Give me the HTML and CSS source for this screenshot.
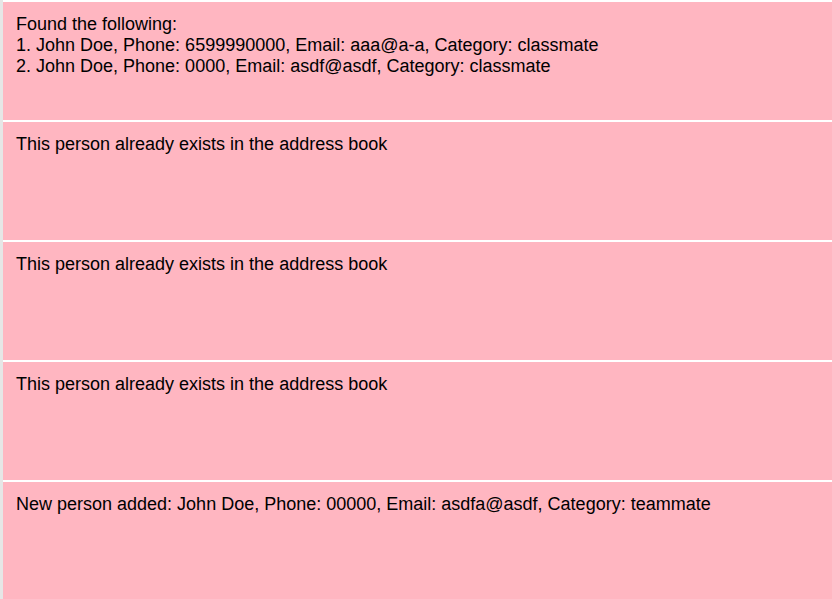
FILE: index.html
```html
<!DOCTYPE html>
<html>
<head>
<meta charset="utf-8">
<link rel="stylesheet" href="styles.css">
</head>
<body>
<div class="list">
  <div class="item">Found the following:<br>1. John Doe, Phone: 6599990000, Email: aaa@a-a, Category: classmate<br>2. John Doe, Phone: 0000, Email: asdf@asdf, Category: classmate</div>
  <div class="item">This person already exists in the address book</div>
  <div class="item">This person already exists in the address book</div>
  <div class="item">This person already exists in the address book</div>
  <div class="item">New person added: John Doe, Phone: 00000, Email: asdfa@asdf, Category: teammate</div>
</div>
</body>
</html>
```
FILE: styles.css
```css
html, body {
  margin: 0;
  padding: 0;
  background: #ffffff;
  height: 100%;
  overflow: hidden;
}
body {
  border-left: 3px solid #e6e6e6;
  font-family: "Liberation Sans", Arial, sans-serif;
  font-size: 18px;
  line-height: 21px;
  color: #000;
}
.list {
  display: flex;
  flex-direction: column;
  gap: 2px;
  padding-top: 2px;
}
.item {
  background: #ffb6c1;
  height: 118px;
  box-sizing: border-box;
  padding: 12px 13px 11px;
}
```
